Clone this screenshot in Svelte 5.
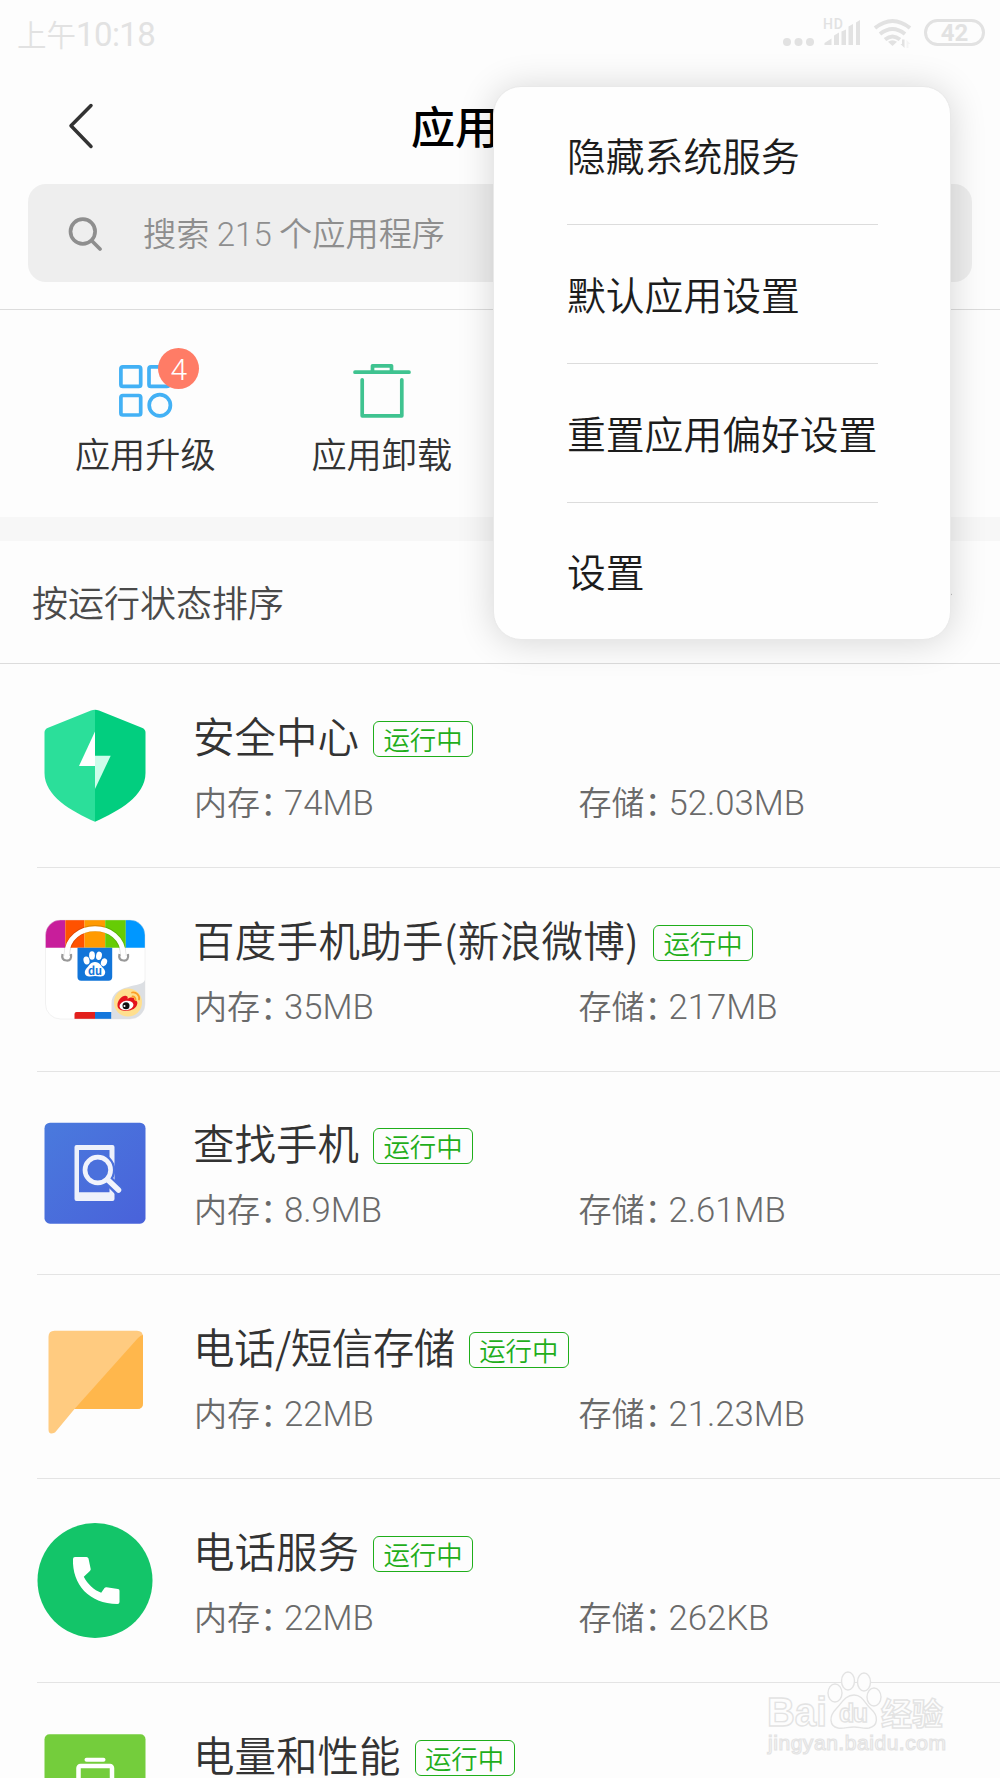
<script lang="ts">
    type App = { icon: string; name: string; memory: string; storage: string; tracking?: number };

    const menuItems = ['隐藏系统服务', '默认应用设置', '重置应用偏好设置', '设置'];

    const apps: App[] = [
        { icon: 'security', name: '安全中心', memory: '74MB', storage: '52.03MB' },
        { icon: 'baidu', name: '百度手机助手(新浪微博)', memory: '35MB', storage: '217MB', tracking: 0.3 },
        { icon: 'find', name: '查找手机', memory: '8.9MB', storage: '2.61MB' },
        { icon: 'message', name: '电话/短信存储', memory: '22MB', storage: '21.23MB', tracking: -0.5 },
        { icon: 'phone', name: '电话服务', memory: '22MB', storage: '262KB' },
        { icon: 'battery', name: '电量和性能', memory: '', storage: '' },
    ];

    let menuOpen = $state(true);
    let updates = $state(4);
</script>

<div class="screen">
    <header class="status-bar">
        <span class="clock">上午<span class="digits">10:18</span></span>
        <svg class="status-icons" width="206" height="32" viewBox="0 0 206 32">
            <g fill="#e2e2e2">
                <circle cx="7" cy="26" r="4" />
                <circle cx="18.500" cy="26" r="4" />
                <circle cx="30" cy="26" r="4" />
                <text x="43" y="13" font-size="14" font-weight="500" textLength="20">HD</text>
                <path d="M44.500 29v-2l7-4.500v6.500zM54 29v-9.500l5-3v12.500zM61.500 29v-13.500l4.500-2v15.500zM68.500 29v-18.500l4.500-2.500v21zM76 29v-22.500l4-2.500v25z" />
                <path d="M112.500 30l-4.500-4.300q4.500-3 9 0z" />
                <path d="M122 23.500h2.500v8.500l-4-4h1.500z" />
                <path d="M126.500 32v-8l4 4h-2v4z" opacity=".3" />
            </g>
            <g fill="none" stroke="#e2e2e2" stroke-width="4">
                <path d="M95 12q17.500-14 35 0M100 18q12.500-10 25 0M105 23.500q7.500-6 15 0" />
            </g>
            <rect x="145.500" y="4.500" width="58" height="24" rx="12" fill="none" stroke="#e2e2e2" stroke-width="3" />
            <text x="174.500" y="25" font-size="24" font-weight="700" fill="#e2e2e2" text-anchor="middle">42</text>
        </svg>
    </header>

    <div class="title-bar">
        <svg class="back" width="30" height="50" viewBox="0 0 30 50">
            <path d="M25 4.500L5 24.800L25 45.500" fill="none" stroke="#333" stroke-width="3.500" stroke-linecap="round" stroke-linejoin="round" />
        </svg>
        <h1>应用</h1>
    </div>

    <div class="search">
        <svg width="36" height="36" viewBox="0 0 36 36" fill="none" stroke="#8e8e8e" stroke-width="3.700" stroke-linecap="round">
            <circle cx="14.800" cy="16.500" r="12.300" />
            <path d="M23.500 25.500L32 34" />
        </svg>
        <span class="hint">搜索 <span class="digits">215</span> 个应用程序</span>
    </div>

    <div class="actions">
        <button class="action">
            <span class="action-icon">
                <svg width="60" height="60" viewBox="0 0 60 60" fill="none" stroke="#43b1f5" stroke-width="3.700">
                    <rect x="5.900" y="6.900" width="19.800" height="19.500" rx="2" />
                    <rect x="34" y="6.900" width="19.800" height="19.500" rx="2" />
                    <rect x="5.900" y="35.500" width="19.800" height="19.500" rx="2" />
                    <circle cx="44.800" cy="45.300" r="10.600" />
                </svg>
                <span class="badge">{updates}</span>
            </span>
            应用升级
        </button>
        <button class="action">
            <span class="action-icon">
                <svg width="60" height="60" viewBox="0 0 60 60" fill="none" stroke="#3fc390" stroke-width="3.700" stroke-linecap="round" stroke-linejoin="round">
                    <path d="M3 12.200H57M20.500 11V5.800H39.500V11" />
                    <path d="M10.200 19.800V55.800H49.800V19.800" />
                </svg>
            </span>
            应用卸载
        </button>
    </div>

    <div class="sort">
        <span class="sort-label">按运行状态排序</span>
        <svg width="22" height="14" viewBox="0 0 22 14">
            <path d="M2 2.500L11 11L20 2.500" fill="none" stroke="#999" stroke-width="2.500" />
        </svg>
    </div>

    <ul class="apps">
        {#each apps as app}
            <li>
                <svg class="app-icon" viewBox="0 0 116 116">
                    {#if app.icon === 'security'}
                        <path d="M58 1.700q-2 0-4 .900L10.500 20q-3 1.500-3 4.500V65C7.500 88 34 103 58 113.700z" fill="#2bdf9a" />
                        <path d="M58 1.700q2 0 4 .900L105.500 20q3 1.500 3 4.500V65C108.500 88 82 103 58 113.700z" fill="#02ce7f" />
                        <path d="M58 23.500V58H42z" fill="#fff" />
                        <path d="M58 47.700H73.700L58 81z" fill="#cdfdeb" />
                    {:else if app.icon === 'baidu'}
                        <defs>
                            <clipPath id="bag"><rect x="8.500" y="8" width="99.500" height="99" rx="15" /></clipPath>
                        </defs>
                        <g clip-path="url(#bag)">
                            <path d="M8 8H108V107H8z" fill="#fff" />
                            <path d="M8 8H28.300V35.700H8z" fill="#c81e9b" />
                            <path d="M28.300 8H47.500V35.700H28.300z" fill="#ff5200" />
                            <path d="M47.500 8H68.200V35.700H47.500z" fill="#ff9a00" />
                            <path d="M68.200 8H88.800V35.700H68.200z" fill="#66cc05" />
                            <path d="M88.800 8H108V35.700H88.800z" fill="#0097ff" />
                            <path d="M37.500 107V102q0-2 2-2H58V107z" fill="#e2201c" />
                            <path d="M58 100H74.500V107H58z" fill="#1477dc" />
                            <path d="M108 68C106 76 74.500 71 74.500 92V107H108z" fill="#dcdfe3" />
                        </g>
                        <rect x="8.500" y="8" width="99.500" height="99" rx="15" fill="none" stroke="#ddd" stroke-width=".4" />
                        <path d="M25.500 42q-1.500 6 4 6.500t4.500-6.500M82.500 42q-1.500 6 4 6.500t4.500-6.500" fill="none" stroke="#999" stroke-width="2.200" />
                        <path d="M29.800 44C30 7 86 7 86.300 44" fill="none" stroke="#0002" stroke-width="6.500" />
                        <path d="M29.800 43C30 8 86 8 86.300 43" fill="none" stroke="#fff" stroke-width="5" stroke-linecap="round" />
                        <path d="M40.500 35.700H75.200V65q0 3.700-3.700 3.700H44.200q-3.700 0-3.700-3.700z" fill="#1275d9" />
                        <g fill="#fff">
                            <ellipse cx="49.500" cy="48.500" rx="3" ry="4" transform="rotate(-12 49.500 48.500)" />
                            <ellipse cx="55" cy="43.500" rx="2.900" ry="4.200" />
                            <ellipse cx="62" cy="43.800" rx="2.900" ry="4.200" transform="rotate(10 62 43.800)" />
                            <ellipse cx="67" cy="50.300" rx="3" ry="4" transform="rotate(20 67 50.300)" />
                            <path d="M58 50c5 0 6 4 9 7 3 4 0 8-4 7.500-4-.8-6-.8-10 0-5 .5-6.500-4-4-7.500C52 54 53 50 58 50z" />
                        </g>
                        <text x="58" y="62.500" font-size="11" font-weight="700" fill="#1275d9" text-anchor="middle">du</text>
                        <circle cx="91" cy="90.500" r="14" fill="#ffdf8e" />
                        <path d="M80.500 94C80 88 86 83 89 84c2 0 2 2 1.500 3 3-2 7-2 7 1 4 1 3 4 2 6-3 6-18 7-19 0z" fill="#e4131c" />
                        <ellipse cx="89.500" cy="93.500" rx="7" ry="4.700" fill="#fff" transform="rotate(-8 89.500 93.500)" />
                        <circle cx="89" cy="93.800" r="3.500" fill="#111" />
                        <circle cx="87.500" cy="94" r="1" fill="#fff" />
                        <path d="M95 80.500c4-1 8 3 7 7M95.500 84.500c2 0 3.300 1.500 3 3.500" fill="none" stroke="#fa9d28" stroke-width="1.800" stroke-linecap="round" />
                    {:else if app.icon === 'find'}
                        <defs>
                            <linearGradient id="find-bg" x1="0" y1="0" x2="1" y2="1">
                                <stop offset="0" stop-color="#4a7add" />
                                <stop offset="1" stop-color="#4962da" />
                            </linearGradient>
                        </defs>
                        <rect x="7.500" y="7.700" width="101" height="101" rx="5.500" fill="url(#find-bg)" />
                        <path d="M39.500 30H75.500q2 0 2 2V84q0 2-2 2H39.500q-2 0-2-2V32q0-2 2-2zM42 35V77.300H72.500V35z" fill="#eef1fb" fill-rule="evenodd" />
                        <path d="M72 66L83 77" stroke="#4a6edb" stroke-width="10" />
                        <circle cx="60.800" cy="55" r="17.500" fill="#4a70dc" />
                        <circle cx="60.800" cy="55" r="12.800" fill="none" stroke="#f1f3fc" stroke-width="4.700" />
                        <path d="M70.500 64.500L81.500 75" stroke="#f1f3fc" stroke-width="5.500" stroke-linecap="round" />
                    {:else if app.icon === 'message'}
                        <path d="M17.500 11.700H100q6 0 6 6V84q0 6-6 6H37.500L18 113.500q-6.500 3-6.500-3V17.700q0-6 6-6z" fill="#ffcb80" />
                        <path d="M37.500 90L101 19q3-3 5-3V84q0 6-6 6z" fill="#ffb74c" />
                    {:else if app.icon === 'phone'}
                        <circle cx="58" cy="57.500" r="57.500" fill="#13c569" />
                        <path d="M38 34H49.500q1.500 0 2 1.500L53.700 46q.2 1.200-.8 2L46.800 53.700C50.500 61 57 67 64.200 69.700L67.500 65q.8-1 2-.8L81 66q1.500.3 1.500 1.800V79q0 2-2 2C52 81 35 61 36 36q0-2 2-2z" fill="#fff" />
                    {:else}
                        <rect x="7.500" y="7.300" width="101" height="101" rx="5" fill="#74cd3c" />
                        <path d="M49.500 32.700H66.500" stroke="#fff" stroke-width="4" stroke-linecap="round" />
                        <rect x="41.500" y="39" width="33.500" height="46" rx="2" fill="none" stroke="#fff" stroke-width="4.500" />
                    {/if}
                </svg>
                <div class="app-info">
                    <div class="app-name">
                        <span class="name" style="letter-spacing: {app.tracking ?? 0}px">{app.name}</span>
                        <span class="tag">运行中</span>
                    </div>
                    <div class="stats">
                        {#if app.memory}
                            <span><span class="label">内存：</span>{app.memory}</span>
                            <span><span class="label">存储：</span>{app.storage}</span>
                        {/if}
                    </div>
                </div>
            </li>
        {/each}
    </ul>

    {#if menuOpen}
        <div class="menu">
            {#each menuItems as item}
                <button class="menu-item" onclick={() => menuOpen = false}>{item}</button>
            {/each}
        </div>
    {/if}

    <svg class="watermark" width="190" height="96" viewBox="0 0 190 96">
        <g fill="#fdfdfd" stroke="#e3e3e3" stroke-width="1.400">
            <text x="7" y="61" font-size="41" font-weight="700" textLength="60" lengthAdjust="spacingAndGlyphs">Bai</text>
            <ellipse cx="75" cy="28" rx="7" ry="9" />
            <ellipse cx="88" cy="16" rx="6.500" ry="9" />
            <ellipse cx="104" cy="17" rx="6.500" ry="9" />
            <ellipse cx="114" cy="32" rx="7" ry="9" />
            <path d="M94 30c9 0 11 9 17 14 8 7 7 17-2 19-6 1-9-1-15-1s-11 2-16 1c-9-2-9-12-2-19 6-6 9-14 18-14z" />
            <text x="79" y="57" font-size="25" font-weight="700" textLength="29">du</text>
            <text x="121" y="60" font-size="31" font-weight="700" textLength="62">经验</text>
            <text x="8" y="85" font-size="21" stroke-width="1.200" textLength="178">jingyan.baidu.com</text>
        </g>
    </svg>
</div>

<style>
    :global(body) {
        background: #fdfdfd;
    }
    .screen {
        position: relative;
        width: 1000px;
        height: 1778px;
        overflow: hidden;
        background: #fdfdfd;
        color: #333;
        font-family: "Noto Sans CJK SC", sans-serif;
        font-weight: 350;
    }
    svg {
        display: block;
        flex-shrink: 0;
    }
    button {
        padding: 0;
        border: none;
        background: none;
        color: inherit;
        font: inherit;
        cursor: pointer;
    }
    .status-bar {
        display: flex;
        align-items: center;
        justify-content: space-between;
        height: 64px;
        padding: 0 14px 0 17px;
        box-sizing: border-box;
    }
    .clock {
        padding-top: 2px;
        font-size: 29.500px;
        color: #e2e2e2;
    }
    .digits {
        font-family: Roboto, sans-serif;
        font-weight: 350;
    }
    .clock .digits {
        font-size: 33px;
        font-weight: 400;
        letter-spacing: -0.600px;
    }
    .status-icons {
        font-family: Roboto, sans-serif;
    }
    .title-bar {
        display: flex;
        align-items: center;
        height: 120px;
        padding: 4px 0 0 66px;
        box-sizing: border-box;
    }
    h1 {
        width: 176px;
        margin: 0 0 3px 315px;
        font-size: 44px;
        font-weight: 500;
        line-height: 60px;
        color: #000;
    }
    .search {
        display: flex;
        align-items: center;
        gap: 39px;
        height: 98px;
        margin: 0 28px;
        padding-left: 40px;
        box-sizing: border-box;
        border-radius: 18px;
        background: #eee;
        color: #8e8e8e;
    }
    .hint {
        margin-bottom: 3px;
        font-size: 33.200px;
    }
    .search .digits {
        font-size: 33px;
    }
    .actions {
        display: grid;
        grid-template-columns: repeat(4, 236.500px);
        height: 208px;
        margin-top: 27px;
        padding: 50px 27px 0;
        box-sizing: border-box;
        border-top: 1px solid #dcdcdc;
    }
    .action {
        display: flex;
        flex-direction: column;
        align-items: center;
        gap: 7px;
        height: 119px;
        font-size: 35.200px;
        line-height: 52px;
    }
    .action-icon {
        position: relative;
    }
    .badge {
        position: absolute;
        top: -12px;
        left: 43px;
        width: 41px;
        height: 41px;
        border-radius: 50%;
        background: #ff7c66;
        color: #fff;
        font-family: Roboto, sans-serif;
        font-size: 30px;
        font-weight: 300;
        line-height: 43px;
        text-align: center;
    }
    .sort {
        display: flex;
        align-items: center;
        justify-content: space-between;
        height: 147px;
        padding: 0 47px 0 32px;
        box-sizing: border-box;
        border-top: 24px solid #f7f7f7;
        border-bottom: 1px solid #dcdcdc;
        color: #4a4a4a;
        font-size: 36px;
    }
    .sort-label {
        margin-bottom: 2px;
    }
    .sort svg {
        margin-bottom: 8px;
    }
    .apps {
        margin: 0;
        padding: 0;
        list-style: none;
    }
    .apps li {
        display: flex;
        align-items: center;
        gap: 41px;
        height: 203.800px;
        padding-top: 1px;
        margin-left: 37px;
        box-sizing: border-box;
        border-bottom: 1.500px solid #e4e4e4;
    }
    .app-icon {
        width: 116px;
        height: 116px;
    }
    .app-info {
        flex: 1;
    }
    .app-name {
        display: flex;
        align-items: center;
        gap: 14px;
        height: 56px;
        white-space: nowrap;
    }
    .name {
        margin: 0 0 4px -1px;
        font-size: 41.500px;
    }
    .tag {
        width: 100px;
        height: 36px;
        margin-top: 4px;
        box-sizing: border-box;
        border: 1.500px solid #1fae1b;
        border-radius: 6px;
        color: #1fae1b;
        font-size: 26.400px;
        line-height: 33px;
        text-align: center;
    }
    .stats {
        display: grid;
        grid-template-columns: 384.500px 1fr;
        height: 44px;
        margin-top: 14px;
        color: #6a6a6a;
        font-family: Roboto, "Noto Sans CJK SC", sans-serif;
        font-size: 34.700px;
        line-height: 44px;
    }
    .label {
        display: inline-block;
        width: 90px;
        font-family: "Noto Sans CJK SC", sans-serif;
        font-feature-settings: "halt";
        font-size: 33px;
        white-space: nowrap;
    }
    .menu {
        position: absolute;
        top: 86px;
        left: 493px;
        width: 458px;
        padding: 0 73px;
        box-sizing: border-box;
        border: 1px solid #e9e9e9;
        border-radius: 28px;
        background: #fefefe;
        box-shadow: 0 2px 36px rgba(0, 0, 0, 0.16);
        color: #1c1c1c;
    }
    .menu-item {
        display: block;
        width: 311px;
        height: 139px;
        padding-bottom: 2px;
        font-size: 38.800px;
        text-align: left;
        white-space: nowrap;
    }
    .menu-item:first-child,
    .menu-item:last-child {
        height: 136.500px;
    }
    .menu-item:last-child {
        height: 137.500px;
    }
    .menu-item + .menu-item {
        border-top: 1px solid #dcdcdc;
    }
    .watermark {
        position: absolute;
        left: 760px;
        top: 1665px;
        font-family: "Liberation Sans", "Noto Sans CJK SC", sans-serif;
    }
</style>
